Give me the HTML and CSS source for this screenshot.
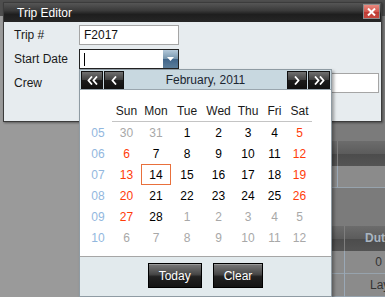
FILE: index.html
```html
<!DOCTYPE html>
<html lang="en">
<head>
  <meta charset="UTF-8" />
  <meta name="viewport" content="width=device-width, initial-scale=1.0"/>
  <title>Trip Editor</title>
  <link rel="stylesheet" href="styles.css">
</head>
<body>
  <div id="desk">
    <div class="topbar"></div>
    <div class="workspace">
      <div class="sidebar"></div>
      <div class="panel">
        <div class="gap-top"></div>
        <div class="grid-head first"><div></div><div></div></div>
        <div class="grid-row first"><div></div><div></div></div>
        <div class="gap-mid"></div>
        <div class="grid-head second"><div></div><div class="col-title">Duty</div></div>
        <div class="grid-row second"><div></div><div class="num">0</div></div>
        <div class="grid-row second"><div></div><div class="txt">Layover</div></div>
      </div>
    </div>

    <!-- dialog -->
    <div class="window">
      <div class="titlebar">
        <span>Trip Editor</span>
        <div class="close">
          <svg width="9" height="8" viewBox="0 0 9 8"><path d="M1 0.5 L8 7.5 M8 0.5 L1 7.5" stroke="#fff" stroke-width="2"/></svg>
        </div>
      </div>
      <div class="form">
        <label>Trip #</label>
        <div class="field w-short">F2017</div>
        <label>Start Date</label>
        <div class="field w-short focus">
          <span class="caret"></span>
          <span class="drop">
            <svg width="7" height="4" viewBox="0 0 7 4"><polygon points="0,0 7,0 3.5,4" fill="#fff"/></svg>
          </span>
        </div>
        <label>Crew</label>
        <div class="field w-long"></div>
      </div>
    </div>

    <!-- date picker popup -->
    <div class="calendar">
      <div class="cal-head">
        <span class="nav wide"><svg width="11" height="9" viewBox="0 0 11 9"><polyline points="5,0.5 1.5,4.5 5,8.5" /><polyline points="10,0.5 6.5,4.5 10,8.5" /></svg></span>
        <span class="nav"><svg width="6" height="9" viewBox="0 0 6 9"><polyline points="5,0.5 1.5,4.5 5,8.5" /></svg></span>
        <span class="month">February, 2011</span>
        <span class="nav"><svg width="6" height="9" viewBox="0 0 6 9"><polyline points="1,0.5 4.5,4.5 1,8.5" /></svg></span>
        <span class="nav wide"><svg width="11" height="9" viewBox="0 0 11 9"><polyline points="1,0.5 4.5,4.5 1,8.5" /><polyline points="6,0.5 9.5,4.5 6,8.5" /></svg></span>
      </div>
      <div class="cal-body">
        <div class="days" id="days"></div>
      </div>
      <div class="cal-foot">
        <button>Today</button>
        <button>Clear</button>
      </div>
    </div>
  </div>

  <script>
    const days = document.getElementById('days');
    const names = ['', 'Sun', 'Mon', 'Tue', 'Wed', 'Thu', 'Fri', 'Sat'];
    names.forEach((n, i) => {
      const c = document.createElement('span');
      c.textContent = n;
      c.className = i === 0 ? 'corner' : 'dow';
      days.appendChild(c);
    });

    // February 2011 starts on a Tuesday
    let d = new Date(2011, 0, 30);
    for (let w = 5; w <= 10; w++) {
      const wk = document.createElement('span');
      wk.className = 'week';
      wk.textContent = String(w).padStart(2, '0');
      days.appendChild(wk);
      for (let i = 0; i < 7; i++) {
        const c = document.createElement('span');
        c.textContent = d.getDate();
        if (d.getMonth() !== 1) c.classList.add('other');
        else if (i === 0 || i === 6) c.classList.add('weekend');
        if (d.getMonth() === 1 && d.getDate() === 14) c.classList.add('today');
        days.appendChild(c);
        d.setDate(d.getDate() + 1);
      }
    }
  </script>
</body>
</html>
```

FILE: styles.css
```css
* {
  box-sizing: border-box;
}

body {
  margin: 0;
  width: 385px;
  height: 297px;
  overflow: hidden;
  background-color: #9a9a9a;
  font-family: "Liberation Sans", Arial, sans-serif;
  font-size: 12px;
  color: #1a1a1a;
}

#desk {
  position: relative;
  width: 385px;
  height: 297px;
  display: flex;
  flex-direction: column;
}

/* background app */
.topbar {
  height: 22px;
  background-color: #4e4e4e;
}

.workspace {
  flex: 1;
  display: flex;
}

.sidebar {
  width: 120px;
  background-color: #9a9a9a;
}

.panel {
  flex: 1;
  display: flex;
  flex-direction: column;
  background-color: #7b7b7b;
  overflow: hidden;
}

.gap-top { height: 125px; }
.gap-mid { height: 38px; }

.grid-head {
  display: grid;
  height: 25px;
  background: linear-gradient(#6c6c6c, #5c5c5c 50%, #4c4c4c 52%, #545454);
}

.grid-row {
  display: grid;
  background-color: #8b8b8b;
  border-bottom: 1px solid #97a3ad;
}

.first { grid-template-columns: 218px 1fr; }
.second { grid-template-columns: 225px 1fr; }

.grid-row.first { height: 22px; }
.grid-row.second { height: 23px; }

.grid-head > div:first-child { border-right: 1px solid #7e7e7e; }
.grid-row > div:first-child { border-right: 1px solid #9aa8b6; }

.col-title {
  padding-left: 20px;
  line-height: 25px;
  font-weight: bold;
  color: #a9b5c1;
  white-space: nowrap;
}

.num {
  text-align: right;
  padding-right: 3px;
  line-height: 23px;
  color: #333;
}

.txt {
  padding-left: 25px;
  line-height: 23px;
  color: #333;
  white-space: nowrap;
}

/* dialog */
.window {
  position: absolute;
  left: 3px;
  top: 2px;
  width: 379px;
  height: 120px;
  background-color: #e7ecef;
  border: 1px solid #3c3c3c;
  box-shadow: 1px 1px 2px rgba(0, 0, 0, 0.4);
}

.titlebar {
  height: 19px;
  display: flex;
  align-items: center;
  justify-content: space-between;
  padding: 0 1px 0 13px;
  background: linear-gradient(#565656, #3a3a3a 40%, #1e1e1e 60%, #262626);
  color: white;
}

.close {
  align-self: flex-start;
  margin-top: 1px;
  width: 17px;
  height: 15px;
  display: flex;
  align-items: center;
  justify-content: center;
  border: 1px solid #8c8c8c;
  background: linear-gradient(#e88a80, #d4574e 50%, #bb3a33 52%, #c9483f);
}

.form {
  display: grid;
  grid-template-columns: 65px auto;
  row-gap: 4px;
  align-items: center;
  padding: 3px 0 0 10px;
}

.field {
  height: 20px;
  display: flex;
  align-items: center;
  padding: 0 4px;
  background-color: white;
  border: 1px solid #a5a5a5;
  color: #111;
}

.w-short { width: 100px; }
.w-long { width: 300px; }

.field.focus {
  border-color: #222;
  padding-right: 0;
}

.caret {
  width: 1px;
  height: 13px;
  background-color: #000;
}

.drop {
  margin-left: auto;
  width: 15px;
  height: 18px;
  display: flex;
  align-items: center;
  justify-content: center;
  background: linear-gradient(#b4c9da, #7796ae 48%, #41658a 52%, #5b7d9a);
}

/* calendar popup */
.calendar {
  position: absolute;
  left: 79px;
  top: 69px;
  width: 253px;
  background-color: white;
  border: 1px solid #8f9ba3;
  box-shadow: 2px 2px 3px rgba(0, 0, 0, 0.35);
}

.cal-head {
  height: 20px;
  display: flex;
  gap: 1px;
  padding: 1px 1px 0;
  background-color: #c8d8e0;
  border-bottom: 1px solid #9aa6ae;
}

.nav {
  width: 20px;
  height: 18px;
  display: flex;
  align-items: center;
  justify-content: center;
  border: 1px solid #111;
  background: linear-gradient(#707070, #404040 48%, #1c1c1c 52%, #111);
}

.nav.wide { width: 22px; }

.nav polyline {
  fill: none;
  stroke: white;
  stroke-width: 1.8;
}

.month {
  flex: 1;
  text-align: center;
  line-height: 19px;
  color: #1c2630;
}

.cal-body {
  padding: 11px 0 8px 4px;
}

.days {
  display: grid;
  grid-template-columns: 28px 29px 30px 32px 31px 28px 25px 25px;
  grid-auto-rows: 21px;
}

.days > span {
  display: flex;
  align-items: center;
  justify-content: center;
  color: #000;
}

.days > .dow {
  color: #1a1a1a;
  border-bottom: 1px solid #c4c4c4;
}

.days > .week { color: #92b7de; }
.days > .weekend { color: #ff3c0a; }
.days > .other { color: #a8a8a8; }

.days > .today {
  border: 1px solid #e8703c;
}

.cal-foot {
  height: 40px;
  display: flex;
  justify-content: center;
  gap: 11px;
  padding-top: 6px;
  background-color: #e2eaed;
  border-top: 1px solid #a6a6a6;
}

.cal-foot button {
  height: 25px;
  padding: 0 10px;
  font-family: inherit;
  font-size: 12px;
  color: white;
  border: 1px solid #000;
  background: linear-gradient(#7a7a7a, #474747 45%, #222 55%, #141414);
  box-shadow: inset 0 1px 0 #9a9a9a;
}
```
